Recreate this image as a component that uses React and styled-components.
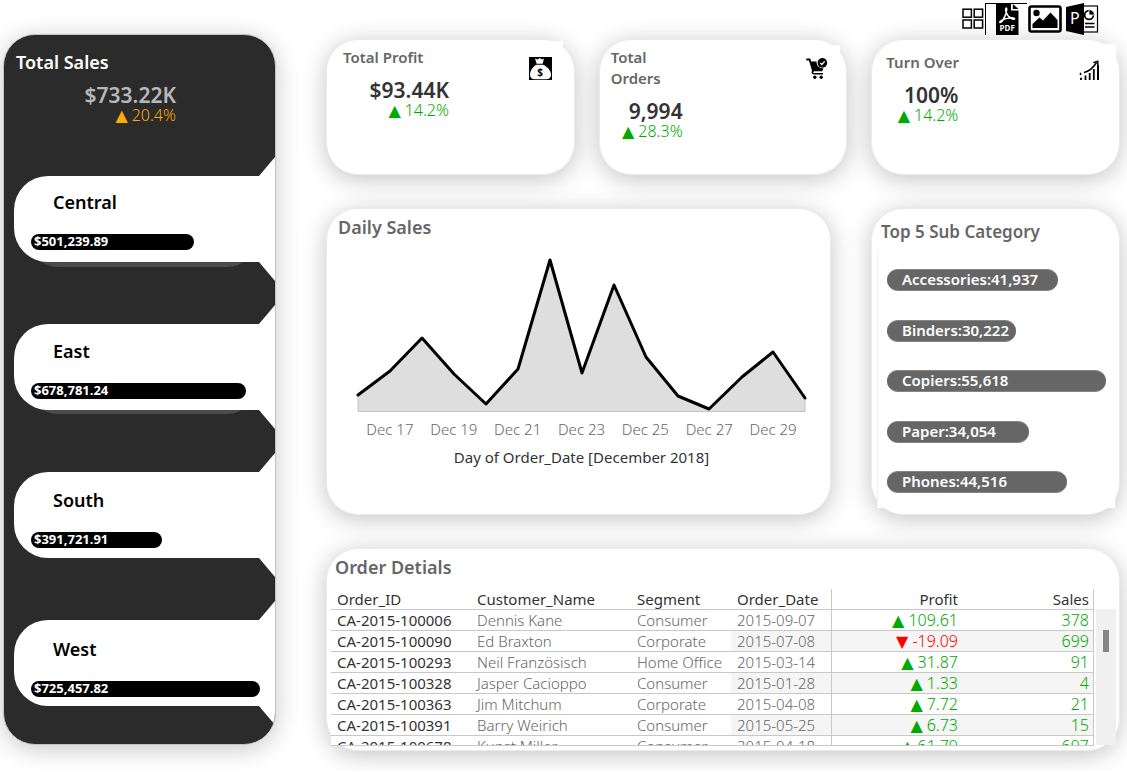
import React from "react";
import styled, { createGlobalStyle } from "styled-components";

const GlobalStyle = createGlobalStyle`
  *, *::before, *::after { box-sizing: border-box; }
  body {
    margin: 0;
    background: #fff;
    color: #333;
    font-family: "Noto Sans", "DejaVu Sans", sans-serif;
    font-size: 15px;
    line-height: 20px;
  }
  h1, h2, p, ul, ol, dl, dd { margin: 0; padding: 0; }
  ul, ol { list-style: none; }
  button { font: inherit; color: inherit; }
`;

const Page = styled.div`
  padding: 0 7px 20px 3px;
`;

const Toolbar = styled.header`
  display: flex;
  justify-content: flex-end;
  align-items: flex-start;
  height: 34px;
  padding: 3px 19px 0 0;
`;

const ToolButton = styled.button`
  display: flex;
  align-items: center;
  justify-content: center;
  width: ${(p) => p.$width}px;
  height: 32px;
  padding: 0;
  border: 0 solid #000;
  border-width: ${(p) => (p.$framed ? "1px 0 0 1px" : "0")};
  background: #fff;
  cursor: pointer;
`;

const Layout = styled.div`
  display: grid;
  grid-template-columns: 273px minmax(0, 1fr);
  column-gap: 50px;
  align-items: start;
`;

const Sidebar = styled.aside`
  display: grid;
  grid-template-rows: 141px auto;
  height: 711px;
  border: 1px solid #c4c4c4;
  border-radius: 32px;
  overflow: hidden;
  background: #2b2b2b;
`;

const SidebarShadow = styled.div`
  border-radius: 32px;
  box-shadow: 0 4px 24px rgba(0, 0, 0, 0.22);
`;

const SidebarHead = styled.div`
  padding: 16px 12px;
`;

const SidebarTitle = styled.h1`
  color: #fff;
  font-size: 18px;
  font-weight: 600;
  line-height: 22px;
`;

const Figures = styled.div`
  width: ${(p) => p.$width}px;
  margin-top: 10px;
  text-align: right;
`;

const Value = styled.p`
  color: ${(p) => p.$color || "#333"};
  font-size: 21px;
  font-weight: 600;
  line-height: 24px;
`;

const Delta = styled.span`
  display: block;
  color: ${(p) => p.$color || "#00aa00"};
  font-size: 16px;
  font-weight: 300;
  line-height: 16px;
  white-space: nowrap;
`;

const Mark = styled.span`
  margin-right: 4px;
  font-family: "DejaVu Sans", sans-serif;
  font-weight: 400;
`;

const Regions = styled.div`
  position: relative;
  z-index: 0;
  display: grid;
  align-items: start;
`;

const Tabs = styled.div`
  grid-area: 1 / 1;
  display: grid;
  row-gap: 62px;
  padding-left: 10px;
`;

const Tab = styled.div`
  position: relative;
  height: 86px;
  border-radius: 34px 0 0 34px;
  background: #fff;

  &::before {
    content: "";
    position: absolute;
    z-index: 1;
    top: -19px;
    bottom: -19px;
    right: 0;
    width: 16px;
    background: #fff;
    clip-path: polygon(100% 0, 100% 100%, 0 calc(100% - 19px), 0 19px);
  }

  &::after {
    content: "";
    position: absolute;
    z-index: -1;
    left: 14px;
    right: 18px;
    bottom: -${(p) => p.$lip}px;
    height: 60px;
    border-radius: 30px;
    background: #4b4b4b;
  }
`;

const RegionList = styled.ul`
  grid-area: 1 / 1;
  position: relative;
  z-index: 1;
  display: grid;
  row-gap: 75px;
  padding: 15px 15px 0 27px;
`;

const Region = styled.li`
  display: grid;
  row-gap: 21px;
  height: 74px;
  align-content: start;
`;

const RegionName = styled.span`
  padding-left: 22px;
  color: #000;
  font-size: 18px;
  font-weight: 600;
  line-height: 22px;
`;

const RegionBar = styled.div`
  height: 16px;
  padding-left: 3px;
  border-radius: 8px;
  background: #000;
  color: #fff;
  font-size: 13px;
  font-weight: 700;
  line-height: 15px;
`;

const Main = styled.main`
  display: grid;
  row-gap: 33px;
  padding-top: 5px;
`;

const Card = styled.section`
  min-width: 0;
  border: 1px solid #ebebeb;
  border-radius: 32px;
  background: #fff;
  box-shadow: 0 4px 24px rgba(0, 0, 0, 0.24);
`;

const StatRow = styled.div`
  display: grid;
  grid-template-columns: repeat(3, minmax(0, 1fr));
  column-gap: 24px;
`;

const StatCard = styled(Card)`
  height: 136px;
  padding: ${(p) => p.$inset};
`;

const StatBody = styled.div`
  display: flex;
  justify-content: space-between;
  height: 80px;
  padding: ${(p) => p.$pad};
  border-radius: 32px 0 0 0;
  background: #fff;
`;

const StatTitle = styled.h2`
  color: #666;
  font-size: 15px;
  font-weight: 600;
  line-height: 21px;
  max-width: ${(p) => p.$max};
`;

const StatIcon = styled.span`
  display: block;
  height: 24px;
  margin-top: ${(p) => p.$top}px;
  svg { display: block; }
`;

const ChartRow = styled.div`
  display: grid;
  grid-template-columns: minmax(0, 505fr) minmax(0, 249fr);
  column-gap: 40px;
`;

const CardTitle = styled.h2`
  color: #666;
  font-size: ${(p) => p.$size || 18}px;
  font-weight: 600;
  line-height: 22px;
`;

const ChartCard = styled(Card)`
  height: 307px;
  padding: 7px 25px 0 11px;
`;

const Plot = styled.figure`
  margin: 19px 0 0 20px;
`;

const PlotArea = styled.svg`
  display: block;
  width: 100%;
  height: 155px;
  overflow: visible;
`;

const Axis = styled.div`
  display: flex;
  margin-top: 7px;
`;

const Tick = styled.span`
  flex: 1;
  color: #666;
  font-weight: 300;
  text-align: center;
  white-space: nowrap;
`;

const AxisTitle = styled.figcaption`
  margin-top: 8px;
  text-align: center;
`;

const TopCard = styled(Card)`
  height: 307px;
  padding: 12px 4px 0 5px;
`;

const TopTitle = styled(CardTitle)`
  padding: 0 4px;
`;

const TopList = styled.ol`
  display: flex;
  flex-direction: column;
  justify-content: space-between;
  height: 255px;
  margin-top: 10px;
  padding: 16px 9px 15px 9px;
  border-left: 1px solid #f2f2f2;
  background: #fff;
`;

const TopBar = styled.li`
  height: 22px;
  padding-left: 15px;
  border: 1px solid #858585;
  border-width: 1px 0;
  border-radius: 11px;
  background: #666;
  color: #fff;
  font-weight: 600;
  line-height: 19px;
  white-space: nowrap;
`;

const OrdersCard = styled(Card)`
  height: 203px;
  padding: 7px 3px 4px 4px;
`;

const OrdersTitle = styled(CardTitle)`
  padding-left: 4px;
`;

const OrdersBody = styled.div`
  display: flex;
  margin-top: 11px;
`;

const TableWindow = styled.div`
  flex: 1;
  height: 157px;
  overflow: hidden;
  border-bottom: 1px solid #c8c8c8;
  background: #fff;
`;

const Table = styled.table`
  width: 100%;
  border-collapse: separate;
  border-spacing: 0;
  table-layout: fixed;
  border-right: 1px solid #c8c8c8;
`;

const Cell = styled.td`
  height: 21px;
  padding: 0 4px 0 6px;
  border-bottom: 1px solid #c8c8c8;
  border-left: ${(p) => (p.$ruled ? "1px solid #c8c8c8" : "0")};
  background: ${(p) => (p.$shaded ? "#f5f5f5" : "transparent")};
  color: ${(p) => p.$color || "#333"};
  font-size: ${(p) => p.$size || 15}px;
  font-weight: ${(p) => p.$weight || 400};
  line-height: 20px;
  text-align: ${(p) => (p.$right ? "right" : "left")};
  white-space: nowrap;
`;

const ScrollTrack = styled.div`
  width: 20px;
  height: 136px;
  margin: 20px 0 0 2px;
  padding: 21px 7px 0;
  background: #f0f0f0;
`;

const ScrollThumb = styled.div`
  height: 22px;
  background: #858585;
`;

const GridIcon = () => (
  <svg width="22" height="22" viewBox="0 0 22 22" fill="none" stroke="#000" strokeWidth="1.5" aria-hidden="true">
    <rect x="1" y="1.2" width="8.4" height="8" />
    <rect x="12.2" y="1.2" width="8.4" height="8" />
    <rect x="1" y="12" width="8.4" height="8" />
    <rect x="12.2" y="12" width="8.4" height="8" />
  </svg>
);

const PdfIcon = () => (
  <svg width="24" height="31" viewBox="0 0 24 31" aria-hidden="true">
    <path d="M1 0H16V6.500H23.500V31H1Z" fill="#000" />
    <path d="M17.800 0L23.500 5H17.800Z" fill="#000" />
    <path
      d="M10.200 4.200C11.400 2 13.400 4 12 8.200C12.700 10.500 14.200 12.200 16 13C19 12.700 20.800 13.700 20.300 15.200C19.700 16.600 17.200 16 15.200 14.700C13 14.800 11 15.200 9 15.900C7.200 18.600 5.200 20 4.200 18.800C3.300 17.600 5 16 7.600 14.900C8.900 12.700 9.800 10.700 10.500 8.400C9.900 6.700 9.700 5.200 10.200 4.200Z"
      fill="#fff"
    />
    <path d="M11.300 10.800L9.900 14.200L13.700 13.400Z" fill="#000" />
    <text x="12.200" y="27" fill="#fff" fontSize="8" fontWeight="700" textAnchor="middle" fontFamily="Noto Sans, sans-serif">
      PDF
    </text>
  </svg>
);

const ImageIcon = () => (
  <svg width="34" height="28" viewBox="0 0 34 28" aria-hidden="true">
    <rect x="1.500" y="1.500" width="31" height="25" rx="2" fill="none" stroke="#000" strokeWidth="2.600" />
    <circle cx="8.500" cy="8" r="3.200" />
    <path d="M4.500 23V19L11.500 12.500L15 15.500L22.500 7.500L29.500 15V23Z" />
  </svg>
);

const SlidesIcon = () => (
  <svg width="34" height="32" viewBox="0 0 34 32" aria-hidden="true">
    <rect x="17" y="3" width="15.500" height="26" fill="#fff" stroke="#000" strokeWidth="1.200" />
    <path d="M1 4L19 0V32L1 28Z" />
    <circle cx="24" cy="12" r="4.400" fill="none" stroke="#000" strokeWidth="1.800" />
    <path d="M24 12V6.600A5.400 5.400 0 0 1 29.400 12Z" stroke="#fff" strokeWidth=".8" />
    <path d="M20 20.500H29.500M20 24H29.500" stroke="#000" strokeWidth="1.400" />
    <text x="9.800" y="21" fill="#fff" fontSize="16" textAnchor="middle" fontFamily="Noto Sans, sans-serif">
      P
    </text>
  </svg>
);

const MoneyBagIcon = () => (
  <svg width="23" height="23" viewBox="0 0 23 23" aria-hidden="true">
    <rect width="23" height="23" />
    <path d="M6 1.500L8.600 2.600L10.700 1L13 2.600L15 1.500L13.600 6.700H7.600Z" fill="#fff" />
    <path d="M7.400 7.700H14C18.700 9.700 22 14 22 17.500C22 20.900 20 22.300 16.500 22.300H6C2.600 22.300 1 20.700 1 17.500C1 14 3.600 9.700 7.400 7.700Z" fill="#fff" />
    <text x="11.200" y="18.600" fontSize="10" fontWeight="700" textAnchor="middle" fontFamily="Noto Sans, sans-serif">
      $
    </text>
  </svg>
);

const CartIcon = () => (
  <svg width="22" height="22" viewBox="0 0 22 22" aria-hidden="true">
    <path d="M1 1.500H3.600L7 12.800" fill="none" stroke="#000" strokeWidth="1.800" strokeLinecap="round" />
    <path d="M4 3.400H10.600C10.300 7.600 13 10.200 17.500 10.300L16.300 13.200H6.800Z" />
    <path d="M7 12.500C5.800 14.300 6.200 15.700 8 15.800H16.500" fill="none" stroke="#000" strokeWidth="1.500" strokeLinecap="round" />
    <circle cx="8.800" cy="19.200" r="1.700" />
    <circle cx="15.200" cy="19.200" r="1.700" />
    <circle cx="16.400" cy="4.900" r="4.800" />
    <path d="M14.200 4.900L15.800 6.500L18.700 3.400" fill="none" stroke="#fff" strokeWidth="1.300" />
  </svg>
);

const GrowthIcon = () => (
  <svg width="21" height="21" viewBox="0 0 21 21" fill="none" stroke="#000" aria-hidden="true">
    <path d="M2 17.800V20M6.500 15.500V20M10.700 13V20M14.800 9V20" strokeWidth="1.800" />
    <path d="M19 5V20" strokeWidth="2" />
    <path d="M1.500 15V12.800M5 12.500C10 11.500 14 8 17.500 2.500" strokeWidth="1.500" />
    <path d="M14.300 2.600L18.700 1.200L18.900 5.800" strokeWidth="1.500" />
  </svg>
);

const TOOLS = [
  { name: "Dashboard", width: 24, icon: GridIcon },
  { name: "Download PDF", width: 42, icon: PdfIcon, framed: true },
  { name: "Download image", width: 36, icon: ImageIcon },
  { name: "Download PowerPoint", width: 38, icon: SlidesIcon },
];

const REGIONS = [
  { name: "Central", amount: "$501,239.89", share: 71, lip: 5 },
  { name: "East", amount: "$678,781.24", share: 94, lip: 4 },
  { name: "South", amount: "$391,721.91", share: 57, lip: 0 },
  { name: "West", amount: "$725,457.82", share: 100, lip: 0 },
];

const STATS = [
  { title: "Total Profit", value: "$93.44K", delta: "14.2%", width: 106, inset: "1px 11px 0 0", pad: "6px 11px 0 16px", icon: MoneyBagIcon, iconTop: 10 },
  { title: "Total Orders", value: "9,994", delta: "28.3%", width: 72, max: "60px", inset: "5px 6px 0 0", pad: "2px 12px 0 11px", icon: CartIcon, iconTop: 11 },
  { title: "Turn Over", value: "100%", delta: "14.2%", width: 72, inset: "4px 3px 0 0", pad: "8px 16px 0 14px", icon: GrowthIcon, iconTop: 8 },
];

const DAILY = [
  [0, 138], [32, 114], [64, 81], [96, 117], [128, 147], [160, 112], [192, 3], [224, 116],
  [256, 28], [288, 100], [320, 139], [351, 152], [384, 120], [415, 95], [447, 141],
];
const TICKS = ["Dec 17", "Dec 19", "Dec 21", "Dec 23", "Dec 25", "Dec 27", "Dec 29"];
const LINE = DAILY.map((p) => p.join(",")).join(" ");

const TOP = [
  { label: "Accessories:41,937", width: 78 },
  { label: "Binders:30,222", width: 59 },
  { label: "Copiers:55,618", width: 100 },
  { label: "Paper:34,054", width: 65 },
  { label: "Phones:44,516", width: 82 },
];

const ORDERS = [
  ["CA-2015-100006", "Dennis Kane", "Consumer", "2015-09-07", "109.61", "378"],
  ["CA-2015-100090", "Ed Braxton", "Corporate", "2015-07-08", "-19.09", "699"],
  ["CA-2015-100293", "Neil Französisch", "Home Office", "2015-03-14", "31.87", "91"],
  ["CA-2015-100328", "Jasper Cacioppo", "Consumer", "2015-01-28", "1.33", "4"],
  ["CA-2015-100363", "Jim Mitchum", "Corporate", "2015-04-08", "7.72", "21"],
  ["CA-2015-100391", "Barry Weirich", "Consumer", "2015-05-25", "6.73", "15"],
  ["CA-2015-100678", "Kunst Miller", "Consumer", "2015-04-18", "61.79", "697"],
];

function Change({ text, color, down }) {
  return (
    <Delta $color={color}>
      <Mark>{down ? "▼" : "▲"}</Mark>
      {text}
    </Delta>
  );
}

function OrderRow({ row, shaded }) {
  const [id, customer, segment, date, profit, sales] = row;
  const loss = profit.startsWith("-");
  return (
    <tr>
      <Cell>{id}</Cell>
      <Cell $color="#666" $weight={300}>{customer}</Cell>
      <Cell $color="#666" $weight={300}>{segment}</Cell>
      <Cell $color="#666" $weight={300} $shaded={shaded}>{date}</Cell>
      <Cell $right $ruled $shaded={shaded}>
        <Change text={profit} down={loss} color={loss ? "#ff0000" : "#00aa00"} />
      </Cell>
      <Cell $right $shaded={shaded} $color="#00aa00" $weight={300} $size={16}>{sales}</Cell>
    </tr>
  );
}

export default function App() {
  return (
    <Page>
      <GlobalStyle />
      <Toolbar>
        {TOOLS.map(({ name, width, framed, icon: Icon }) => (
          <ToolButton key={name} type="button" aria-label={name} $width={width} $framed={framed}>
            <Icon />
          </ToolButton>
        ))}
      </Toolbar>
      <Layout>
        <SidebarShadow>
          <Sidebar>
            <SidebarHead>
              <SidebarTitle>Total Sales</SidebarTitle>
              <Figures $width={160}>
                <Value $color="#b8b8b8">$733.22K</Value>
                <Change text="20.4%" color="#ffaa00" />
              </Figures>
            </SidebarHead>
            <Regions>
              <Tabs aria-hidden="true">
                {REGIONS.map((r) => (
                  <Tab key={r.name} $lip={r.lip} />
                ))}
              </Tabs>
              <RegionList>
                {REGIONS.map((r) => (
                  <Region key={r.name}>
                    <RegionName>{r.name}</RegionName>
                    <RegionBar style={{ width: `${r.share}%` }}>{r.amount}</RegionBar>
                  </Region>
                ))}
              </RegionList>
            </Regions>
          </Sidebar>
        </SidebarShadow>
        <Main>
          <StatRow>
            {STATS.map(({ icon: Icon, ...s }) => (
              <StatCard key={s.title} $inset={s.inset}>
                <StatBody $pad={s.pad}>
                  <div>
                    <StatTitle $max={s.max}>{s.title}</StatTitle>
                    <Figures $width={s.width}>
                      <Value>{s.value}</Value>
                      <Change text={s.delta} />
                    </Figures>
                  </div>
                  <StatIcon $top={s.iconTop}>
                    <Icon />
                  </StatIcon>
                </StatBody>
              </StatCard>
            ))}
          </StatRow>
          <ChartRow>
            <ChartCard>
              <CardTitle>Daily Sales</CardTitle>
              <Plot>
                <PlotArea viewBox="0 0 447 155" preserveAspectRatio="none" role="img" aria-label="Daily sales, December 2018">
                  <polygon points={`0,154 ${LINE} 447,154`} fill="#dedede" />
                  <path d="M0 138V154.500H447V141" fill="none" stroke="#c4c4c4" vectorEffect="non-scaling-stroke" />
                  <polyline points={LINE} fill="none" stroke="#000" strokeWidth="3" strokeLinejoin="round" strokeLinecap="round" vectorEffect="non-scaling-stroke" />
                </PlotArea>
                <Axis>
                  {TICKS.map((t) => (
                    <Tick key={t}>{t}</Tick>
                  ))}
                </Axis>
                <AxisTitle>Day of Order_Date [December 2018]</AxisTitle>
              </Plot>
            </ChartCard>
            <TopCard>
              <TopTitle $size={17}>Top 5 Sub Category</TopTitle>
              <TopList>
                {TOP.map((t) => (
                  <TopBar key={t.label} style={{ width: `${t.width}%` }}>{t.label}</TopBar>
                ))}
              </TopList>
            </TopCard>
          </ChartRow>
          <OrdersCard>
            <OrdersTitle>Order Detials</OrdersTitle>
            <OrdersBody>
              <TableWindow>
                <Table>
                  <colgroup>
                    <col style={{ width: 140 }} />
                    <col style={{ width: 160 }} />
                    <col style={{ width: 100 }} />
                    <col style={{ width: 100 }} />
                    <col />
                    <col />
                  </colgroup>
                  <thead>
                    <tr>
                      <Cell as="th" scope="col">Order_ID</Cell>
                      <Cell as="th" scope="col">Customer_Name</Cell>
                      <Cell as="th" scope="col">Segment</Cell>
                      <Cell as="th" scope="col">Order_Date</Cell>
                      <Cell as="th" scope="col" $right $ruled>Profit</Cell>
                      <Cell as="th" scope="col" $right>Sales</Cell>
                    </tr>
                  </thead>
                  <tbody>
                    {ORDERS.map((row, i) => (
                      <OrderRow key={row[0]} row={row} shaded={i % 2 === 1} />
                    ))}
                  </tbody>
                </Table>
              </TableWindow>
              <ScrollTrack>
                <ScrollThumb />
              </ScrollTrack>
            </OrdersBody>
          </OrdersCard>
        </Main>
      </Layout>
    </Page>
  );
}
